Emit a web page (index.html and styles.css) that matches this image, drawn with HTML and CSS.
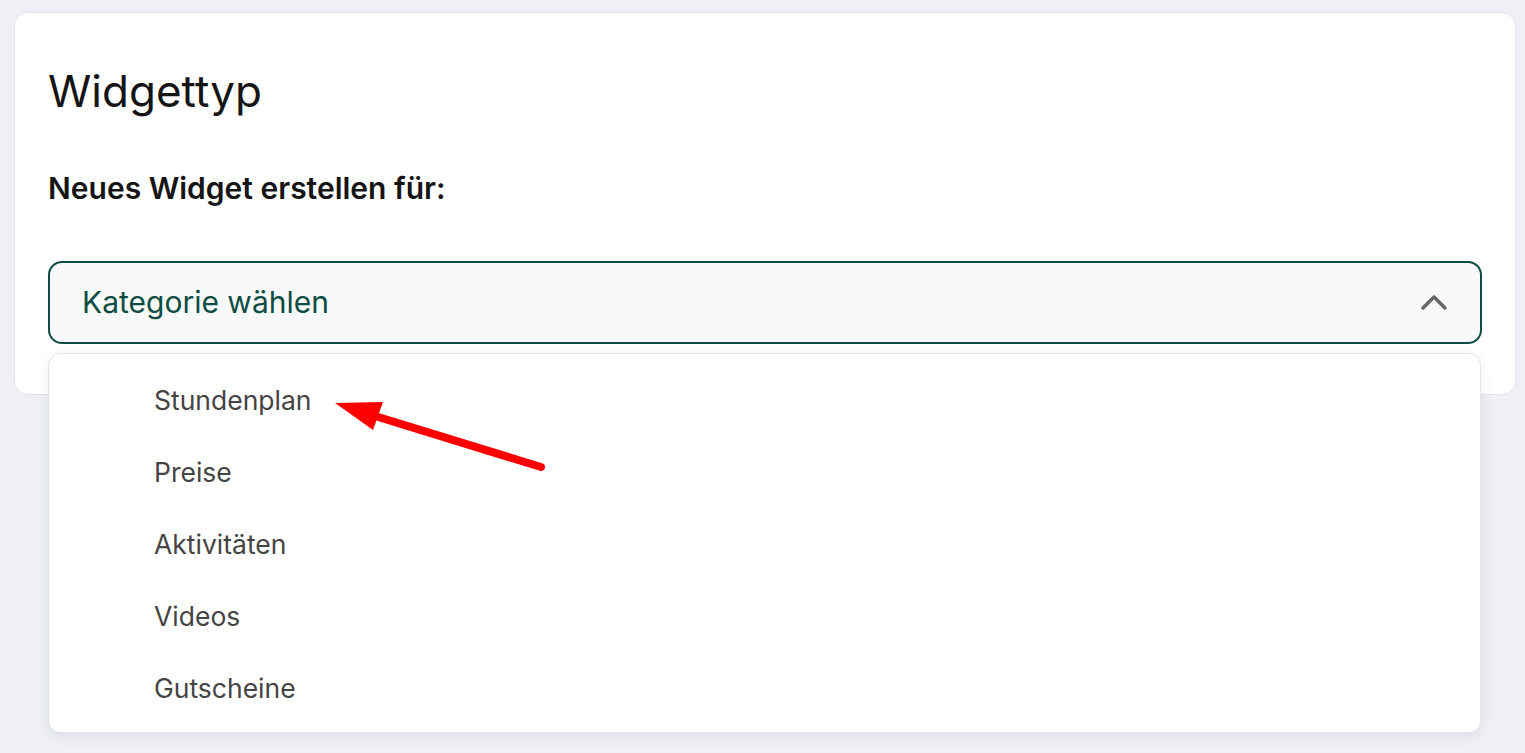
FILE: index.html
```html
<!DOCTYPE html>
<html lang="de">
<head>
    <meta charset="UTF-8">
    <meta name="viewport" content="width=device-width, initial-scale=1.0">
    <title>Widgettyp</title>
    <link rel="stylesheet" href="styles.css">
</head>
<body>
    <div class="page">
        <div class="card">
            <h1>Widgettyp</h1>
            <label class="field-label">Neues Widget erstellen für:</label>

            <div class="select-wrap">
                <div class="select">
                    <span>Kategorie wählen</span>
                    <svg class="chevron" width="28" height="18" viewBox="0 0 28 18">
                        <path d="M3 15 L14 4 L25 15" fill="none" stroke="#666" stroke-width="3.5" stroke-linecap="round" stroke-linejoin="round"/>
                    </svg>
                </div>

                <ul class="menu">
                    <li>Stundenplan</li>
                    <li>Preise</li>
                    <li>Aktivitäten</li>
                    <li>Videos</li>
                    <li>Gutscheine</li>
                </ul>

                <svg class="arrow" width="240" height="100" viewBox="0 0 240 100">
                    <line x1="232" y1="94" x2="66" y2="43" stroke="#ff0000" stroke-width="8" stroke-linecap="round"/>
                    <polygon points="26,30 74,29 64,57" fill="#ff0000"/>
                </svg>
            </div>
        </div>
    </div>
</body>
</html>
```

FILE: styles.css
```css
body {
    margin: 0;
    padding: 0;
    background-color: #eef0f5;
    font-family: Inter, "Noto Sans", sans-serif;
    color: #1a1a1a;
}
.page {
    padding: 12px 9px 0 14px;
    height: 741px;
}
.card {
    background: #fff;
    border: 1px solid #e3e5ea;
    border-radius: 14px;
    padding: 52px 33px 50px 33px;
}
h1 {
    margin: 0;
    font-size: 44px;
    font-weight: 400;
    line-height: 52px;
    color: #151515;
}
.field-label {
    display: block;
    margin-top: 52px;
    font-size: 30px;
    font-weight: 600;
    line-height: 38px;
    color: #151515;
}
.select-wrap {
    position: relative;
    margin-top: 54px;
}
.select {
    display: flex;
    align-items: center;
    justify-content: space-between;
    box-sizing: border-box;
    height: 83px;
    padding: 0 32px 2px 32px;
    border: 2px solid #0f4c43;
    border-radius: 14px;
    background: #f8f9f9;
    font-size: 30px;
    color: #0f4c43;
}
.chevron {
    display: block;
}
.menu {
    position: absolute;
    top: 92px;
    left: 0;
    right: 1px;
    margin: 0;
    padding: 10px 0 8px 0;
    list-style: none;
    background: #fff;
    border: 1px solid #e2e4e9;
    border-radius: 12px;
    box-shadow: 0 4px 14px rgba(30, 40, 70, 0.08);
}
.menu li {
    height: 72px;
    line-height: 72px;
    padding-left: 105px;
    font-size: 26.5px;
    color: #444;
}
.arrow {
    position: absolute;
    left: 261px;
    top: 112px;
}
```
